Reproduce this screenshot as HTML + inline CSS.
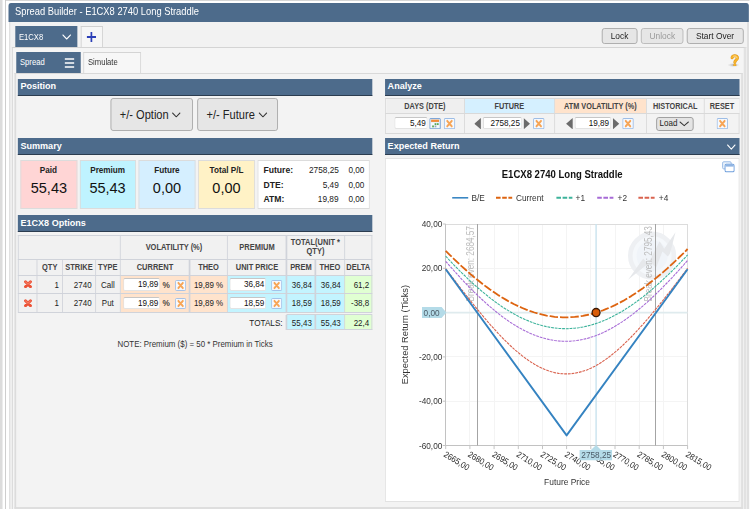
<!DOCTYPE html>
<html lang="en"><head><meta charset="utf-8"><title>Spread Builder - E1CX8 2740 Long Straddle</title>
<style>
html,body{margin:0;padding:0;background:#fff;overflow:hidden}
body{width:750px;height:509px;position:relative;font-family:"Liberation Sans",sans-serif}
#w{position:absolute;left:0;top:0;width:882.35px;height:509px;transform:scaleX(.85);transform-origin:0 0;overflow:hidden}
.a{position:absolute;box-sizing:border-box}
.t{white-space:nowrap}
</style></head><body>
<div id="w">
<div class="a" style="left:0.0px;top:0px;width:3.41px;height:509px;background:#dcdcdc"></div>
<div class="a" style="left:5.88px;top:0px;width:876.47px;height:1.1px;background:#d6d6d6"></div>
<div class="a" style="left:5.88px;top:0px;width:1.3px;height:509px;background:#c6c6c6"></div>
<div class="a" style="left:11px;top:22px;width:870px;height:487px;background:#f2f2f2;border-left:1px solid #d6d6d6;border-right:2px solid #dedede"></div>
<div class="a" style="left:882px;top:300px;width:1px;height:209px;background:#e2e2e2"></div>
<div class="a" style="left:10px;top:3px;width:871px;height:19px;background:#4d6b8b;border-radius:3px 3px 0 0"></div>
<div class="a t" style="left:17.65px;top:2.4px;height:18.0px;line-height:18.0px;color:#fff;font-size:11px">Spread Builder - E1CX8 2740 Long Straddle</div>
<div class="a" style="left:17.65px;top:26px;width:72.94px;height:22px;background:#4d6b8b"></div>
<div class="a t" style="left:22.35px;top:26.8px;height:21.4px;line-height:21.4px;color:#fff;font-size:9px">E1CX8</div>
<svg class="a" style="left:73.53px;top:35.2px;overflow:visible" width="8.94" height="4.0"><polyline points="0,0 4.47,4.0 8.94,0" fill="none" stroke="#fff" stroke-width="1.15" stroke-linecap="round" stroke-linejoin="round"/></svg>
<div class="a" style="left:94.59px;top:25.6px;width:26.35px;height:22.4px;background:#f6f6f6;border:1px solid #d0d0d0;border-bottom:none"></div>
<svg class="a" style="left:101.88px;top:31.6px" width="11.06" height="10"><path d="M0 5 H11.06 M5.53 0 V10" stroke="#2b3fb7" stroke-width="2" fill="none"/></svg>
<div class="a" style="left:708.24px;top:28.4px;width:42.0px;height:15.2px;background:#e6e6e6;border:1px solid #a9a9a9;border-radius:3px;"></div><div class="a t" style="left:708.24px;width:42.0px;text-align:center;top:29.0px;height:15.2px;line-height:15.2px;color:#222;font-size:9.3px"><span style="display:inline-block;transform:scaleX(1.0588);transform-origin:50% 50%">Lock</span></div>
<div class="a" style="left:754.47px;top:28.4px;width:49.65px;height:15.2px;background:#e6e6e6;border:1px solid #a9a9a9;border-radius:3px;border-color:#b8b8b8;"></div><div class="a t" style="left:754.47px;width:49.65px;text-align:center;top:29.0px;height:15.2px;line-height:15.2px;color:#9a9a9a;font-size:9.3px"><span style="display:inline-block;transform:scaleX(1.0588);transform-origin:50% 50%">Unlock</span></div>
<div class="a" style="left:808.35px;top:28.4px;width:66.59px;height:15.2px;background:#e6e6e6;border:1px solid #a9a9a9;border-radius:3px;"></div><div class="a t" style="left:808.35px;width:66.59px;text-align:center;top:29.0px;height:15.2px;line-height:15.2px;color:#222;font-size:9.3px"><span style="display:inline-block;transform:scaleX(1.0588);transform-origin:50% 50%">Start Over</span></div>
<div class="a" style="left:14px;top:47.4px;width:864px;height:464.6px;background:#f5f5f5;border:1px solid #d4d4d4;border-right:3px solid #e2e2e2"></div>
<div class="a" style="left:18.82px;top:52.4px;width:75.77px;height:21.6px;background:#4d6b8b"></div>
<div class="a t" style="left:23.53px;top:52.4px;height:21.0px;line-height:21.0px;color:#fff;font-size:9px">Spread</div>
<svg class="a" style="left:76.24px;top:57.6px" width="11.29" height="10"><path d="M0 1 H11.29 M0 5 H11.29 M0 9 H11.29" stroke="#fff" stroke-width="1.3" fill="none"/></svg>
<div class="a" style="left:97.88px;top:52px;width:67.77px;height:22px;background:#f7f7f7;border:1px solid #d4d4d4;border-bottom:none"></div>
<div class="a t" style="left:103.53px;top:52.4px;height:21.0px;line-height:21.0px;color:#333;font-size:9px">Simulate</div>
<div class="a" style="left:856.0px;top:63.4px;width:14.12px;height:3.2px;background:radial-gradient(ellipse at center,rgba(150,150,150,.75) 0%,rgba(190,190,190,.35) 45%,rgba(220,220,220,0) 72%)"></div>
<svg class="a" style="left:859.18px;top:53.5px" width="10.82" height="12.6" viewBox="0 0 9.2 12.6" preserveAspectRatio="none"><g fill="none" stroke-linecap="round"><path d="M1.9 3.7 C1.9 1.1 7.3 0.9 7.3 3.9 C7.3 5.8 4.7 6.1 4.7 8.3" stroke="#dc961d" stroke-width="3"/><path d="M1.9 3.7 C1.9 1.1 7.3 0.9 7.3 3.9 C7.3 5.8 4.7 6.1 4.7 8.3" stroke="#f8b42a" stroke-width="2.1"/><path d="M3.6 2.2 C5.2 1.6 6.9 2.3 6.9 3.9" stroke="#fde2a2" stroke-width=".9"/></g><circle cx="4.7" cy="11" r="1.55" fill="#dc961d"/><circle cx="4.7" cy="10.9" r="1.1" fill="#f8b42a"/></svg>
<div class="a" style="left:17px;top:73.2px;width:857px;height:435.8px;background:#f3f3f3;border:1px solid #d9d9d9;border-bottom:2px solid #dedede;border-left:2px solid #dcdcdc;border-right:2px solid #dedede"></div>
<div class="a" style="left:20.71px;top:79px;width:416.94px;height:16.6px;background:#4d6b8b;border-bottom:1.6px solid #2b3c4f"></div><div class="a t" style="left:23.53px;top:79.1px;height:14.4px;line-height:14.4px;color:#fff;font-weight:bold;font-size:9.8px"><span style="display:inline-block;transform:scaleX(1.0882);transform-origin:0 50%">Position</span></div>
<div class="a" style="left:453.41px;top:79px;width:416.83px;height:16.6px;background:#4d6b8b;border-bottom:1.6px solid #2b3c4f"></div><div class="a t" style="left:456.24px;top:79.1px;height:14.4px;line-height:14.4px;color:#fff;font-weight:bold;font-size:9.8px"><span style="display:inline-block;transform:scaleX(1.0882);transform-origin:0 50%">Analyze</span></div>
<div class="a" style="left:20.71px;top:138.4px;width:416.94px;height:16.8px;background:#4d6b8b;border-bottom:1.6px solid #2b3c4f"></div><div class="a t" style="left:23.53px;top:138.5px;height:14.6px;line-height:14.6px;color:#fff;font-weight:bold;font-size:9.8px"><span style="display:inline-block;transform:scaleX(1.0882);transform-origin:0 50%">Summary</span></div>
<div class="a" style="left:453.41px;top:138.4px;width:416.83px;height:16.8px;background:#4d6b8b;border-bottom:1.6px solid #2b3c4f"></div><div class="a t" style="left:456.24px;top:138.5px;height:14.6px;line-height:14.6px;color:#fff;font-weight:bold;font-size:9.8px"><span style="display:inline-block;transform:scaleX(1.0882);transform-origin:0 50%">Expected Return</span></div>
<div class="a" style="left:20.71px;top:215.4px;width:416.94px;height:16.8px;background:#4d6b8b;border-bottom:1.6px solid #2b3c4f"></div><div class="a t" style="left:23.53px;top:215.5px;height:14.6px;line-height:14.6px;color:#fff;font-weight:bold;font-size:9.8px"><span style="display:inline-block;transform:scaleX(1.0882);transform-origin:0 50%">E1CX8 Options</span></div>
<svg class="a" style="left:856.24px;top:144.9px;overflow:visible" width="8.71" height="4.2"><polyline points="0,0 4.355,4.2 8.71,0" fill="none" stroke="#fff" stroke-width="1.15" stroke-linecap="round" stroke-linejoin="round"/></svg>
<div class="a" style="left:129.65px;top:98.2px;width:96.94px;height:32.4px;background:#e6e6e6;border:1px solid #a9a9a9;border-radius:3px"></div><div class="a t" style="left:140.94px;top:99.2px;height:32.0px;line-height:32.0px;color:#222;font-size:13px">+/- Option</div><svg class="a" style="left:203.41px;top:113.1px;overflow:visible" width="8.71" height="3.8"><polyline points="0,0 4.355,3.8 8.71,0" fill="none" stroke="#333" stroke-width="1.05" stroke-linecap="round" stroke-linejoin="round"/></svg>
<div class="a" style="left:232.24px;top:98.2px;width:95.05px;height:32.4px;background:#e6e6e6;border:1px solid #a9a9a9;border-radius:3px"></div><div class="a t" style="left:243.06px;top:99.2px;height:32.0px;line-height:32.0px;color:#222;font-size:13px">+/- Future</div><svg class="a" style="left:304.59px;top:113.1px;overflow:visible" width="8.71" height="3.8"><polyline points="0,0 4.355,3.8 8.71,0" fill="none" stroke="#333" stroke-width="1.05" stroke-linecap="round" stroke-linejoin="round"/></svg>
<div class="a" style="left:453.41px;top:98px;width:416.83px;height:35.6px;background:#f3f3f3;border:1px solid #d9d9d9"></div>
<div class="a" style="left:454.59px;top:99px;width:91.76px;height:14.2px;background:#efefef"></div>
<div class="a t" style="left:453.41px;width:92.94px;text-align:center;top:99px;height:14px;line-height:14px;color:#444;font-weight:bold;font-size:8.6px">DAYS (DTE)</div>
<div class="a" style="left:546.94px;top:99px;width:105.18px;height:14.2px;background:#d5f0ff"></div>
<div class="a t" style="left:546.35px;width:105.77px;text-align:center;top:99px;height:14px;line-height:14px;color:#444;font-weight:bold;font-size:8.6px">FUTURE</div>
<div class="a" style="left:652.71px;top:99px;width:107.76px;height:14.2px;background:#ffe3cc"></div>
<div class="a t" style="left:652.12px;width:108.35px;text-align:center;top:99px;height:14px;line-height:14px;color:#444;font-weight:bold;font-size:8.6px">ATM VOLATILITY (%)</div>
<div class="a" style="left:761.06px;top:99px;width:67.41px;height:14.2px;background:#f4f4f4"></div>
<div class="a t" style="left:760.47px;width:68.0px;text-align:center;top:99px;height:14px;line-height:14px;color:#444;font-weight:bold;font-size:8.6px">HISTORICAL</div>
<div class="a" style="left:829.06px;top:99px;width:40.47px;height:14.2px;background:#f4f4f4"></div>
<div class="a t" style="left:828.47px;width:41.77px;text-align:center;top:99px;height:14px;line-height:14px;color:#444;font-weight:bold;font-size:8.6px">RESET</div>
<div class="a" style="left:545.76px;top:98px;width:1.18px;height:35.6px;background:#d9d9d9"></div>
<div class="a" style="left:651.53px;top:98px;width:1.18px;height:35.6px;background:#d9d9d9"></div>
<div class="a" style="left:759.88px;top:98px;width:1.18px;height:35.6px;background:#d9d9d9"></div>
<div class="a" style="left:827.88px;top:98px;width:1.18px;height:35.6px;background:#d9d9d9"></div>
<div class="a" style="left:453.41px;top:112.8px;width:416.83px;height:1.0px;background:#d9d9d9"></div>
<div class="a" style="left:463.53px;top:117.3px;width:39.76px;height:12.0px;background:#fff;border:1px solid #e3e3e3;border-top-color:#c6c6c6;border-left-color:#d2d2d2;color:#111;font-size:9.6px;text-align:right;padding-right:1.2px;line-height:10.2px;border-radius:2px">5,49</div>
<svg class="a" style="left:504.94px;top:118.0px" width="13.65" height="11.4" viewBox="0 0 13 11"><rect x=".5" y=".5" width="12" height="10" rx="1" fill="#dfeaf6" stroke="#7ea6d8"/><rect x="2" y="1.6" width="9" height="2.2" fill="#f08c3a"/><rect x="2" y="4.4" width="9" height="5" fill="#f7fafd"/><rect x="6" y="5" width="2" height="1.8" fill="#5aa65a"/><rect x="8.6" y="5" width="2" height="1.8" fill="#5aa65a"/><rect x="3.2" y="7.2" width="2" height="1.8" fill="#5aa65a"/><rect x="6" y="7.2" width="2" height="1.8" fill="#9ab"/></svg>
<svg class="a" style="left:521.88px;top:118.2px" width="13.65" height="11.2" viewBox="0 0 13 11"><rect x=".5" y=".5" width="12" height="10" rx="1" fill="#f6f9fd" stroke="#9dbde6"/><path d="M3.9 2.9 L9.1 8.1 M9.1 2.9 L3.9 8.1" stroke="#f7a556" stroke-width="2.2" stroke-linecap="round" fill="none"/></svg>
<svg class="a" style="left:558.35px;top:117.7px" width="7.77" height="11.4"><polygon points="7.77,0 7.77,11.4 0,5.7" fill="#6b6b6b"/></svg>
<div class="a" style="left:568.47px;top:117.3px;width:45.41px;height:12.0px;background:#fff;border:1px solid #e3e3e3;border-top-color:#c6c6c6;border-left-color:#d2d2d2;color:#111;font-size:9.6px;text-align:right;padding-right:1.2px;line-height:10.2px;border-radius:2px">2758,25</div>
<svg class="a" style="left:616.24px;top:117.7px" width="7.52" height="11.4"><polygon points="0,0 7.52,5.7 0,11.4" fill="#6b6b6b"/></svg>
<svg class="a" style="left:627.06px;top:118.2px" width="13.65" height="11.2" viewBox="0 0 13 11"><rect x=".5" y=".5" width="12" height="10" rx="1" fill="#f6f9fd" stroke="#9dbde6"/><path d="M3.9 2.9 L9.1 8.1 M9.1 2.9 L3.9 8.1" stroke="#f7a556" stroke-width="2.2" stroke-linecap="round" fill="none"/></svg>
<svg class="a" style="left:666.12px;top:117.7px" width="7.76" height="11.4"><polygon points="7.76,0 7.76,11.4 0,5.7" fill="#6b6b6b"/></svg>
<div class="a" style="left:676.47px;top:117.3px;width:42.35px;height:12.0px;background:#fff;border:1px solid #e3e3e3;border-top-color:#c6c6c6;border-left-color:#d2d2d2;color:#111;font-size:9.6px;text-align:right;padding-right:1.2px;line-height:10.2px;border-radius:2px">19,89</div>
<svg class="a" style="left:721.18px;top:117.7px" width="7.53" height="11.4"><polygon points="0,0 7.53,5.7 0,11.4" fill="#6b6b6b"/></svg>
<svg class="a" style="left:732.24px;top:118.2px" width="13.65" height="11.2" viewBox="0 0 13 11"><rect x=".5" y=".5" width="12" height="10" rx="1" fill="#f6f9fd" stroke="#9dbde6"/><path d="M3.9 2.9 L9.1 8.1 M9.1 2.9 L3.9 8.1" stroke="#f7a556" stroke-width="2.2" stroke-linecap="round" fill="none"/></svg>
<div class="a" style="left:772.0px;top:116.8px;width:44.24px;height:14.0px;background:#e4e4e4;border:1px solid #999;border-radius:3px"></div>
<div class="a t" style="left:775.53px;top:117.2px;height:13.6px;line-height:13.6px;color:#222;font-size:9.2px"><span style="display:inline-block;transform:scaleX(1.0235);transform-origin:0 50%">Load</span></div>
<svg class="a" style="left:800.47px;top:122.2px;overflow:visible" width="9.88" height="3.6"><polyline points="0,0 4.94,3.6 9.88,0" fill="none" stroke="#333" stroke-width="1.05" stroke-linecap="round" stroke-linejoin="round"/></svg>
<svg class="a" style="left:843.18px;top:118.2px" width="13.65" height="11.2" viewBox="0 0 13 11"><rect x=".5" y=".5" width="12" height="10" rx="1" fill="#f6f9fd" stroke="#9dbde6"/><path d="M3.9 2.9 L9.1 8.1 M9.1 2.9 L3.9 8.1" stroke="#f7a556" stroke-width="2.2" stroke-linecap="round" fill="none"/></svg>
<div class="a" style="left:23.53px;top:160px;width:67.06px;height:49px;background:#ffd5d5;border:1px solid #dcdcdc"></div><div class="a t" style="left:23.53px;width:67.06px;text-align:center;top:163px;height:14px;line-height:14px;color:#222;font-weight:bold;font-size:9.6px">Paid</div><div class="a t" style="left:23.53px;width:67.06px;text-align:center;top:177.0px;height:22.0px;line-height:22.0px;color:#111;font-size:14.8px"><span style="display:inline-block;transform:scaleX(1.1529);transform-origin:50% 50%">55,43</span></div>
<div class="a" style="left:93.65px;top:160px;width:66.0px;height:49px;background:#bff3ff;border:1px solid #dcdcdc"></div><div class="a t" style="left:93.65px;width:66.0px;text-align:center;top:163px;height:14px;line-height:14px;color:#222;font-weight:bold;font-size:9.6px">Premium</div><div class="a t" style="left:93.65px;width:66.0px;text-align:center;top:177.0px;height:22.0px;line-height:22.0px;color:#111;font-size:14.8px"><span style="display:inline-block;transform:scaleX(1.1529);transform-origin:50% 50%">55,43</span></div>
<div class="a" style="left:162.71px;top:160px;width:67.41px;height:49px;background:#d5efff;border:1px solid #dcdcdc"></div><div class="a t" style="left:162.71px;width:67.41px;text-align:center;top:163px;height:14px;line-height:14px;color:#222;font-weight:bold;font-size:9.6px">Future</div><div class="a t" style="left:162.71px;width:67.41px;text-align:center;top:177.0px;height:22.0px;line-height:22.0px;color:#111;font-size:14.8px"><span style="display:inline-block;transform:scaleX(1.1529);transform-origin:50% 50%">0,00</span></div>
<div class="a" style="left:233.18px;top:160px;width:66.7px;height:49px;background:#fff2c6;border:1px solid #dcdcdc"></div><div class="a t" style="left:233.18px;width:66.7px;text-align:center;top:163px;height:14px;line-height:14px;color:#222;font-weight:bold;font-size:9.6px">Total P/L</div><div class="a t" style="left:233.18px;width:66.7px;text-align:center;top:177.0px;height:22.0px;line-height:22.0px;color:#111;font-size:14.8px"><span style="display:inline-block;transform:scaleX(1.1529);transform-origin:50% 50%">0,00</span></div>
<div class="a" style="left:302.82px;top:160px;width:132.24px;height:49px;background:#fff;border:1px solid #dcdcdc"></div>
<div class="a t" style="left:310.12px;top:162.9px;height:14.0px;line-height:14.0px;color:#222;font-weight:bold;font-size:8.6px"><span style="display:inline-block;transform:scaleX(1.1765);transform-origin:0 50%">Future:</span></div>
<div class="a t" style="right:483.88px;top:162.9px;height:14.0px;line-height:14.0px;color:#222;font-size:8.5px"><span style="display:inline-block;transform:scaleX(1.1471);transform-origin:100% 50%">2758,25</span></div>
<div class="a t" style="right:454.23px;top:162.9px;height:14.0px;line-height:14.0px;color:#222;font-size:8.5px"><span style="display:inline-block;transform:scaleX(1.1294);transform-origin:100% 50%">0,00</span></div>
<div class="a t" style="left:310.12px;top:177.6px;height:14.0px;line-height:14.0px;color:#222;font-weight:bold;font-size:8.6px"><span style="display:inline-block;transform:scaleX(1.1765);transform-origin:0 50%">DTE:</span></div>
<div class="a t" style="right:483.88px;top:177.6px;height:14.0px;line-height:14.0px;color:#222;font-size:8.5px"><span style="display:inline-block;transform:scaleX(1.1471);transform-origin:100% 50%">5,49</span></div>
<div class="a t" style="right:454.23px;top:177.6px;height:14.0px;line-height:14.0px;color:#222;font-size:8.5px"><span style="display:inline-block;transform:scaleX(1.1294);transform-origin:100% 50%">0,00</span></div>
<div class="a t" style="left:310.12px;top:192.0px;height:14.0px;line-height:14.0px;color:#222;font-weight:bold;font-size:8.6px"><span style="display:inline-block;transform:scaleX(1.1765);transform-origin:0 50%">ATM:</span></div>
<div class="a t" style="right:483.88px;top:192.0px;height:14.0px;line-height:14.0px;color:#222;font-size:8.5px"><span style="display:inline-block;transform:scaleX(1.1471);transform-origin:100% 50%">19,89</span></div>
<div class="a t" style="right:454.23px;top:192.0px;height:14.0px;line-height:14.0px;color:#222;font-size:8.5px"><span style="display:inline-block;transform:scaleX(1.1294);transform-origin:100% 50%">0,00</span></div>
<div class="a" style="left:21.41px;top:235px;width:416.24px;height:76.7px;background:#f1f1f1"></div>
<div class="a" style="left:141.65px;top:275px;width:126.0px;height:18.2px;background:#ffe3cc"></div>
<div class="a" style="left:267.65px;top:275px;width:137.53px;height:18.2px;background:#c3f4ff"></div>
<div class="a" style="left:405.18px;top:275px;width:32.47px;height:18.2px;background:#e0ffd2"></div>
<div class="a" style="left:141.65px;top:293.2px;width:126.0px;height:19.0px;background:#ffe3cc"></div>
<div class="a" style="left:267.65px;top:293.2px;width:137.53px;height:19.0px;background:#c3f4ff"></div>
<div class="a" style="left:405.18px;top:293.2px;width:32.47px;height:19.0px;background:#e0ffd2"></div>
<div class="a" style="left:337.06px;top:314.6px;width:68.12px;height:15.0px;background:#c3f4ff"></div>
<div class="a" style="left:405.18px;top:314.6px;width:32.47px;height:15.0px;background:#e0ffd2"></div>
<div class="a" style="left:21.41px;top:234.5px;width:416.71px;height:1.0px;background:#d0d3da"></div>
<div class="a" style="left:21.41px;top:259.4px;width:416.71px;height:1.0px;background:#d0d3da"></div>
<div class="a" style="left:21.41px;top:274.5px;width:416.71px;height:1.0px;background:#d0d3da"></div>
<div class="a" style="left:21.41px;top:292.7px;width:416.71px;height:1.0px;background:#d0d3da"></div>
<div class="a" style="left:21.41px;top:311.7px;width:416.71px;height:1.0px;background:#d0d3da"></div>
<div class="a" style="left:336.59px;top:314.1px;width:101.53px;height:1.0px;background:#d0d3da"></div>
<div class="a" style="left:336.59px;top:329.1px;width:101.53px;height:1.0px;background:#d0d3da"></div>
<div class="a" style="left:20.82px;top:235px;width:1.3px;height:77.2px;background:#d0d3da"></div>
<div class="a" style="left:42.71px;top:259.9px;width:1.29px;height:52.3px;background:#d0d3da"></div>
<div class="a" style="left:73.18px;top:259.9px;width:1.29px;height:52.3px;background:#d0d3da"></div>
<div class="a" style="left:111.53px;top:259.9px;width:1.29px;height:52.3px;background:#d0d3da"></div>
<div class="a" style="left:141.06px;top:235px;width:1.29px;height:77.2px;background:#d0d3da"></div>
<div class="a" style="left:222.47px;top:259.9px;width:1.29px;height:52.3px;background:#d0d3da"></div>
<div class="a" style="left:267.06px;top:235px;width:1.29px;height:77.2px;background:#d0d3da"></div>
<div class="a" style="left:336.47px;top:235px;width:1.29px;height:77.2px;background:#d0d3da"></div>
<div class="a" style="left:370.47px;top:259.9px;width:1.29px;height:52.3px;background:#d0d3da"></div>
<div class="a" style="left:404.59px;top:235px;width:1.29px;height:77.2px;background:#d0d3da"></div>
<div class="a" style="left:437.06px;top:235px;width:1.29px;height:77.2px;background:#d0d3da"></div>
<div class="a" style="left:336.47px;top:314.6px;width:1.29px;height:15.0px;background:#d0d3da"></div>
<div class="a" style="left:370.47px;top:314.6px;width:1.29px;height:15.0px;background:#d0d3da"></div>
<div class="a" style="left:404.59px;top:314.6px;width:1.29px;height:15.0px;background:#d0d3da"></div>
<div class="a" style="left:437.06px;top:314.6px;width:1.29px;height:15.0px;background:#d0d3da"></div>
<div class="a t" style="left:141.65px;width:126.0px;text-align:center;top:235px;height:24.9px;line-height:24.9px;color:#444;font-weight:bold;font-size:8.8px">VOLATILITY (%)</div>
<div class="a t" style="left:267.65px;width:69.41px;text-align:center;top:235px;height:24.9px;line-height:24.9px;color:#444;font-weight:bold;font-size:8.8px">PREMIUM</div>
<div class="a" style="left:337.06px;top:238.0px;width:68.12px;text-align:center;line-height:9.4px;color:#444;font-weight:bold;font-size:8.8px">TOTAL(UNIT *<br>QTY)</div>
<div class="a t" style="left:43.29px;width:30.47px;text-align:center;top:259.9px;height:15.7px;line-height:15.7px;color:#444;font-weight:bold;font-size:8.8px">QTY</div>
<div class="a t" style="left:73.76px;width:38.36px;text-align:center;top:259.9px;height:15.7px;line-height:15.7px;color:#444;font-weight:bold;font-size:8.8px">STRIKE</div>
<div class="a t" style="left:112.12px;width:29.53px;text-align:center;top:259.9px;height:15.7px;line-height:15.7px;color:#444;font-weight:bold;font-size:8.8px">TYPE</div>
<div class="a t" style="left:141.65px;width:81.41px;text-align:center;top:259.9px;height:15.7px;line-height:15.7px;color:#444;font-weight:bold;font-size:8.8px">CURRENT</div>
<div class="a t" style="left:223.06px;width:44.59px;text-align:center;top:259.9px;height:15.7px;line-height:15.7px;color:#444;font-weight:bold;font-size:8.8px">THEO</div>
<div class="a t" style="left:267.65px;width:69.41px;text-align:center;top:259.9px;height:15.7px;line-height:15.7px;color:#444;font-weight:bold;font-size:8.8px">UNIT PRICE</div>
<div class="a t" style="left:337.06px;width:34.0px;text-align:center;top:259.9px;height:15.7px;line-height:15.7px;color:#444;font-weight:bold;font-size:8.8px">PREM</div>
<div class="a t" style="left:371.06px;width:34.12px;text-align:center;top:259.9px;height:15.7px;line-height:15.7px;color:#444;font-weight:bold;font-size:8.8px">THEO</div>
<div class="a t" style="left:405.18px;width:32.47px;text-align:center;top:259.9px;height:15.7px;line-height:15.7px;color:#444;font-weight:bold;font-size:8.8px">DELTA</div>
<svg class="a" style="left:27.76px;top:279.95px" width="9.88" height="8.5" viewBox="0 0 8.4 8.8" preserveAspectRatio="none"><defs><linearGradient id="rg" x1="0" y1="0" x2="0" y2="1"><stop offset="0" stop-color="#f4735a"/><stop offset="1" stop-color="#e8462b"/></linearGradient></defs><path d="M1.7 1.8 L6.7 7 M6.7 1.8 L1.7 7" stroke="#ec5337" stroke-width="2.9" stroke-linecap="round" fill="none"/><path d="M1.9 1.9 L4.2 4.2 L6.5 1.9" stroke="#f47a62" stroke-width="1.2" stroke-linecap="round" fill="none"/></svg>
<div class="a t" style="right:812.94px;top:275px;height:20.0px;line-height:20.0px;color:#222;font-size:9.4px">1</div>
<div class="a t" style="right:774.59px;top:275px;height:20.0px;line-height:20.0px;color:#222;font-size:9.4px">2740</div>
<div class="a t" style="left:112.12px;width:29.53px;text-align:center;top:275px;height:20.0px;line-height:20.0px;color:#222;font-size:9.4px">Call</div>
<div class="a" style="left:145.29px;top:278.1px;width:43.18px;height:12.6px;background:#fff;border:1px solid #e3e3e3;border-top-color:#c6c6c6;border-left-color:#d2d2d2;color:#111;font-size:9.6px;text-align:right;padding-right:1.2px;line-height:10.8px;border-radius:2px">19,89</div>
<div class="a t" style="left:191.06px;top:275px;height:19.8px;line-height:19.8px;color:#222;font-size:9.4px;font-size:9.6px;color:#111;-webkit-text-stroke:.12px #333">%</div>
<svg class="a" style="left:205.76px;top:279.6px" width="12.94" height="11" viewBox="0 0 13 11"><rect x=".5" y=".5" width="12" height="10" rx="1" fill="#f6f9fd" stroke="#9dbde6"/><path d="M3.9 2.9 L9.1 8.1 M9.1 2.9 L3.9 8.1" stroke="#f7a556" stroke-width="2.2" stroke-linecap="round" fill="none"/></svg>
<div class="a t" style="left:223.06px;width:44.59px;text-align:center;top:275px;height:20.0px;line-height:20.0px;color:#222;font-size:9.4px">19,89 %</div>
<div class="a" style="left:270.24px;top:278.1px;width:42.94px;height:12.6px;background:#fff;border:1px solid #e3e3e3;border-top-color:#c6c6c6;border-left-color:#d2d2d2;color:#111;font-size:9.6px;text-align:right;padding-right:1.2px;line-height:10.8px;border-radius:2px">36,84</div>
<svg class="a" style="left:318.82px;top:279.6px" width="12.94" height="11" viewBox="0 0 13 11"><rect x=".5" y=".5" width="12" height="10" rx="1" fill="#f6f9fd" stroke="#9dbde6"/><path d="M3.9 2.9 L9.1 8.1 M9.1 2.9 L3.9 8.1" stroke="#f7a556" stroke-width="2.2" stroke-linecap="round" fill="none"/></svg>
<div class="a t" style="left:339.18px;width:31.88px;text-align:center;top:275px;height:20.0px;line-height:20.0px;color:#222;font-size:9.4px">36,84</div>
<div class="a t" style="left:373.18px;width:32.0px;text-align:center;top:275px;height:20.0px;line-height:20.0px;color:#222;font-size:9.4px">36,84</div>
<div class="a t" style="right:448.0px;top:275px;height:20.0px;line-height:20.0px;color:#222;font-size:9.4px">61,2</div>
<svg class="a" style="left:27.76px;top:298.55px" width="9.88" height="8.5" viewBox="0 0 8.4 8.8" preserveAspectRatio="none"><defs><linearGradient id="rg" x1="0" y1="0" x2="0" y2="1"><stop offset="0" stop-color="#f4735a"/><stop offset="1" stop-color="#e8462b"/></linearGradient></defs><path d="M1.7 1.8 L6.7 7 M6.7 1.8 L1.7 7" stroke="#ec5337" stroke-width="2.9" stroke-linecap="round" fill="none"/><path d="M1.9 1.9 L4.2 4.2 L6.5 1.9" stroke="#f47a62" stroke-width="1.2" stroke-linecap="round" fill="none"/></svg>
<div class="a t" style="right:812.94px;top:293.2px;height:20.8px;line-height:20.8px;color:#222;font-size:9.4px">1</div>
<div class="a t" style="right:774.59px;top:293.2px;height:20.8px;line-height:20.8px;color:#222;font-size:9.4px">2740</div>
<div class="a t" style="left:112.12px;width:29.53px;text-align:center;top:293.2px;height:20.8px;line-height:20.8px;color:#222;font-size:9.4px">Put</div>
<div class="a" style="left:145.29px;top:296.7px;width:43.18px;height:12.6px;background:#fff;border:1px solid #e3e3e3;border-top-color:#c6c6c6;border-left-color:#d2d2d2;color:#111;font-size:9.6px;text-align:right;padding-right:1.2px;line-height:10.8px;border-radius:2px">19,89</div>
<div class="a t" style="left:191.06px;top:293.2px;height:20.6px;line-height:20.6px;color:#222;font-size:9.4px;font-size:9.6px;color:#111;-webkit-text-stroke:.12px #333">%</div>
<svg class="a" style="left:205.76px;top:298.2px" width="12.94" height="11" viewBox="0 0 13 11"><rect x=".5" y=".5" width="12" height="10" rx="1" fill="#f6f9fd" stroke="#9dbde6"/><path d="M3.9 2.9 L9.1 8.1 M9.1 2.9 L3.9 8.1" stroke="#f7a556" stroke-width="2.2" stroke-linecap="round" fill="none"/></svg>
<div class="a t" style="left:223.06px;width:44.59px;text-align:center;top:293.2px;height:20.8px;line-height:20.8px;color:#222;font-size:9.4px">19,89 %</div>
<div class="a" style="left:270.24px;top:296.7px;width:42.94px;height:12.6px;background:#fff;border:1px solid #e3e3e3;border-top-color:#c6c6c6;border-left-color:#d2d2d2;color:#111;font-size:9.6px;text-align:right;padding-right:1.2px;line-height:10.8px;border-radius:2px">18,59</div>
<svg class="a" style="left:318.82px;top:298.2px" width="12.94" height="11" viewBox="0 0 13 11"><rect x=".5" y=".5" width="12" height="10" rx="1" fill="#f6f9fd" stroke="#9dbde6"/><path d="M3.9 2.9 L9.1 8.1 M9.1 2.9 L3.9 8.1" stroke="#f7a556" stroke-width="2.2" stroke-linecap="round" fill="none"/></svg>
<div class="a t" style="left:339.18px;width:31.88px;text-align:center;top:293.2px;height:20.8px;line-height:20.8px;color:#222;font-size:9.4px">18,59</div>
<div class="a t" style="left:373.18px;width:32.0px;text-align:center;top:293.2px;height:20.8px;line-height:20.8px;color:#222;font-size:9.4px">18,59</div>
<div class="a t" style="right:448.0px;top:293.2px;height:20.8px;line-height:20.8px;color:#222;font-size:9.4px">-38,8</div>
<div class="a t" style="right:549.88px;top:314.6px;height:15.8px;line-height:15.8px;color:#222;font-size:9.6px">TOTALS:</div>
<div class="a t" style="left:339.18px;width:31.88px;text-align:center;top:314.6px;height:15.8px;line-height:15.8px;color:#222;font-size:9.4px">55,43</div>
<div class="a t" style="left:373.18px;width:32.0px;text-align:center;top:314.6px;height:15.8px;line-height:15.8px;color:#222;font-size:9.4px">55,43</div>
<div class="a t" style="right:448.0px;top:314.6px;height:15.8px;line-height:15.8px;color:#222;font-size:9.4px">22,4</div>
<div class="a t" style="left:21.41px;width:416.24px;text-align:center;top:337px;height:14px;line-height:14px;color:#333;font-size:9.3px">NOTE: Premium ($) = 50 * Premium in Ticks</div>
<div class="a" style="left:453.41px;top:158px;width:416.83px;height:343.6px;background:#fff;border:1px solid #e2e2e2"></div>
<svg class="a" style="left:849.18px;top:161.2px" width="15.76" height="11.6" viewBox="0 0 16 12"><rect x="1" y=".8" width="10.5" height="7.4" rx="1.4" fill="#eaf2fb" stroke="#8fb4e3" stroke-width="1"/><rect x="4" y="3.4" width="11" height="7.8" rx="1.4" fill="#fff" stroke="#6f9fdc" stroke-width="1.1"/><rect x="4.5" y="4" width="10" height="1.8" fill="#8fb4e3"/></svg>
</div>
<svg id="chart" width="750" height="509" viewBox="0 0 750 509" font-family="'Liberation Sans', sans-serif" style="position:absolute;left:0;top:0">
<line x1="445.5" y1="224.0" x2="445.5" y2="445.5" stroke="#f4f4f4" stroke-width="1"/>
<line x1="469.5" y1="224.0" x2="469.5" y2="445.5" stroke="#f4f4f4" stroke-width="1"/>
<line x1="494.5" y1="224.0" x2="494.5" y2="445.5" stroke="#f4f4f4" stroke-width="1"/>
<line x1="518.5" y1="224.0" x2="518.5" y2="445.5" stroke="#f4f4f4" stroke-width="1"/>
<line x1="542.5" y1="224.0" x2="542.5" y2="445.5" stroke="#f4f4f4" stroke-width="1"/>
<line x1="566.5" y1="224.0" x2="566.5" y2="445.5" stroke="#f4f4f4" stroke-width="1"/>
<line x1="590.5" y1="224.0" x2="590.5" y2="445.5" stroke="#f4f4f4" stroke-width="1"/>
<line x1="615.5" y1="224.0" x2="615.5" y2="445.5" stroke="#f4f4f4" stroke-width="1"/>
<line x1="639.5" y1="224.0" x2="639.5" y2="445.5" stroke="#f4f4f4" stroke-width="1"/>
<line x1="663.5" y1="224.0" x2="663.5" y2="445.5" stroke="#f4f4f4" stroke-width="1"/>
<line x1="687.5" y1="224.0" x2="687.5" y2="445.5" stroke="#f4f4f4" stroke-width="1"/>
<line x1="445.7" y1="224.5" x2="687.6" y2="224.5" stroke="#f4f4f4" stroke-width="1"/>
<line x1="445.7" y1="268.5" x2="687.6" y2="268.5" stroke="#f4f4f4" stroke-width="1"/>
<line x1="445.7" y1="312.5" x2="687.6" y2="312.5" stroke="#f4f4f4" stroke-width="1"/>
<line x1="445.7" y1="356.5" x2="687.6" y2="356.5" stroke="#f4f4f4" stroke-width="1"/>
<line x1="445.7" y1="401.5" x2="687.6" y2="401.5" stroke="#f4f4f4" stroke-width="1"/>
<line x1="445.7" y1="445.5" x2="687.6" y2="445.5" stroke="#f4f4f4" stroke-width="1"/>
<rect x="445.5" y="224.5" width="242.0" height="221.0" fill="none" stroke="#dcdcdc" stroke-width="1"/>
<line x1="445.5" y1="224.0" x2="445.5" y2="445.5" stroke="#c2c2c2" stroke-width="1"/>
<line x1="445.7" y1="445.5" x2="687.6" y2="445.5" stroke="#c2c2c2" stroke-width="1"/>
<line x1="445.7" y1="445.5" x2="445.7" y2="449.1" stroke="#c4c4c4" stroke-width="1"/>
<line x1="469.9" y1="445.5" x2="469.9" y2="449.1" stroke="#c4c4c4" stroke-width="1"/>
<line x1="494.1" y1="445.5" x2="494.1" y2="449.1" stroke="#c4c4c4" stroke-width="1"/>
<line x1="518.3" y1="445.5" x2="518.3" y2="449.1" stroke="#c4c4c4" stroke-width="1"/>
<line x1="542.5" y1="445.5" x2="542.5" y2="449.1" stroke="#c4c4c4" stroke-width="1"/>
<line x1="566.6" y1="445.5" x2="566.6" y2="449.1" stroke="#c4c4c4" stroke-width="1"/>
<line x1="590.8" y1="445.5" x2="590.8" y2="449.1" stroke="#c4c4c4" stroke-width="1"/>
<line x1="615.0" y1="445.5" x2="615.0" y2="449.1" stroke="#c4c4c4" stroke-width="1"/>
<line x1="639.2" y1="445.5" x2="639.2" y2="449.1" stroke="#c4c4c4" stroke-width="1"/>
<line x1="663.4" y1="445.5" x2="663.4" y2="449.1" stroke="#c4c4c4" stroke-width="1"/>
<line x1="687.6" y1="445.5" x2="687.6" y2="449.1" stroke="#c4c4c4" stroke-width="1"/>
<line x1="442.7" y1="224.0" x2="445.7" y2="224.0" stroke="#c4c4c4" stroke-width="1"/>
<line x1="442.7" y1="268.3" x2="445.7" y2="268.3" stroke="#c4c4c4" stroke-width="1"/>
<line x1="442.7" y1="312.6" x2="445.7" y2="312.6" stroke="#c4c4c4" stroke-width="1"/>
<line x1="442.7" y1="356.9" x2="445.7" y2="356.9" stroke="#c4c4c4" stroke-width="1"/>
<line x1="442.7" y1="401.2" x2="445.7" y2="401.2" stroke="#c4c4c4" stroke-width="1"/>
<line x1="442.7" y1="445.5" x2="445.7" y2="445.5" stroke="#c4c4c4" stroke-width="1"/>
<g><circle cx="652.1" cy="255.7" r="21.8" fill="#f5f8fb" stroke="#eef0f3" stroke-width="4.6"/><circle cx="652.1" cy="255.7" r="15.5" fill="#f0f4f9" stroke="none"/><path d="M628.1 279.7 L643.2 258.4 L648 263.9 L659.7 241.2 L664.2 248.8 L675.5 232.3 L670 253.6 L667.9 256.4 L662.4 251.6 L656.2 267.4 L650.1 261.9 Z" fill="#e6e8eb"/></g>
<line x1="445.7" y1="312.6" x2="687.6" y2="312.6" stroke="#dfebee" stroke-width="1.6"/>
<line x1="596.1" y1="224.0" x2="596.1" y2="445.5" stroke="#c9e3ee" stroke-width="1.4"/>
<line x1="477.5" y1="224.0" x2="477.5" y2="445.5" stroke="#a4a4a4" stroke-width="1"/>
<line x1="655.5" y1="224.0" x2="655.5" y2="445.5" stroke="#a4a4a4" stroke-width="1"/>
<text transform="translate(473.66 226.2) rotate(-90) scale(0.8 1)" font-size="10.2" fill="#bcbcbc" text-anchor="end" font-weight="normal" >Break even: 2684,57</text>
<text transform="translate(652.04 226.2) rotate(-90) scale(0.8 1)" font-size="10.2" fill="#bcbcbc" text-anchor="end" font-weight="normal" >Break even: 2795,43</text>
<g fill="none" stroke-linejoin="round">
<polyline points="445.7,268.6 449.7,273.9 453.8,279.3 457.8,284.5 461.8,289.8 465.9,294.9 469.9,300.1 473.9,305.1 478.0,310.1 482.0,314.9 486.0,319.7 490.0,324.4 494.1,328.9 498.1,333.3 502.1,337.5 506.2,341.6 510.2,345.5 514.2,349.2 518.3,352.6 522.3,355.9 526.3,358.9 530.4,361.7 534.4,364.2 538.4,366.5 542.5,368.5 546.5,370.1 550.5,371.5 554.6,372.6 558.6,373.4 562.6,373.8 566.6,373.9 570.7,373.8 574.7,373.2 578.7,372.4 582.8,371.3 586.8,369.9 590.8,368.2 594.9,366.2 598.9,363.9 602.9,361.3 607.0,358.5 611.0,355.5 615.0,352.2 619.1,348.7 623.1,345.0 627.1,341.1 631.2,337.0 635.2,332.8 639.2,328.4 643.3,323.9 647.3,319.3 651.3,314.6 655.3,309.7 659.4,304.8 663.4,299.8 667.4,294.7 671.5,289.5 675.5,284.3 679.5,279.0 683.6,273.7 687.6,268.4" stroke="#d9634f" stroke-width="1.1" stroke-dasharray="2.8,0.9"/>
<polyline points="445.7,261.3 449.7,265.9 453.8,270.5 457.8,274.9 461.8,279.3 465.9,283.6 469.9,287.7 473.9,291.8 478.0,295.7 482.0,299.5 486.0,303.2 490.0,306.7 494.1,310.1 498.1,313.4 502.1,316.5 506.2,319.4 510.2,322.2 514.2,324.8 518.3,327.2 522.3,329.4 526.3,331.5 530.4,333.4 534.4,335.1 538.4,336.5 542.5,337.8 546.5,338.9 550.5,339.8 554.6,340.5 558.6,341.0 562.6,341.2 566.6,341.3 570.7,341.1 574.7,340.8 578.7,340.2 582.8,339.5 586.8,338.5 590.8,337.3 594.9,336.0 598.9,334.4 602.9,332.7 607.0,330.7 611.0,328.6 615.0,326.3 619.1,323.8 623.1,321.2 627.1,318.4 631.2,315.4 635.2,312.3 639.2,309.0 643.3,305.6 647.3,302.1 651.3,298.4 655.3,294.6 659.4,290.7 663.4,286.6 667.4,282.5 671.5,278.3 675.5,273.9 679.5,269.5 683.6,265.0 687.6,260.4" stroke="#a76bd6" stroke-width="1.1" stroke-dasharray="2.8,0.9"/>
<polyline points="445.7,256.2 449.7,260.5 453.8,264.8 457.8,268.9 461.8,272.9 465.9,276.8 469.9,280.7 473.9,284.4 478.0,288.0 482.0,291.4 486.0,294.7 490.0,297.9 494.1,301.0 498.1,303.9 502.1,306.7 506.2,309.3 510.2,311.8 514.2,314.1 518.3,316.3 522.3,318.3 526.3,320.1 530.4,321.7 534.4,323.2 538.4,324.5 542.5,325.7 546.5,326.6 550.5,327.4 554.6,328.0 558.6,328.4 562.6,328.6 566.6,328.7 570.7,328.5 574.7,328.2 578.7,327.7 582.8,327.0 586.8,326.1 590.8,325.1 594.9,323.9 598.9,322.5 602.9,320.9 607.0,319.2 611.0,317.3 615.0,315.2 619.1,313.0 623.1,310.7 627.1,308.1 631.2,305.5 635.2,302.6 639.2,299.7 643.3,296.6 647.3,293.4 651.3,290.0 655.3,286.5 659.4,282.9 663.4,279.2 667.4,275.4 671.5,271.5 675.5,267.5 679.5,263.4 683.6,259.2 687.6,254.9" stroke="#3db39b" stroke-width="1.1" stroke-dasharray="2.8,0.9"/>
<polyline points="445.7,269.3 566.6,435.4 687.6,269.3" stroke="#3583c1" stroke-width="1.9"/>
<polyline points="445.7,250.8 449.7,254.8 453.8,258.8 457.8,262.6 461.8,266.4 465.9,270.0 469.9,273.6 473.9,277.0 478.0,280.3 482.0,283.5 486.0,286.6 490.0,289.5 494.1,292.3 498.1,295.0 502.1,297.5 506.2,299.9 510.2,302.2 514.2,304.3 518.3,306.2 522.3,308.0 526.3,309.7 530.4,311.2 534.4,312.5 538.4,313.7 542.5,314.7 546.5,315.6 550.5,316.2 554.6,316.8 558.6,317.1 562.6,317.3 566.6,317.4 570.7,317.2 574.7,316.9 578.7,316.5 582.8,315.8 586.8,315.0 590.8,314.1 594.9,313.0 598.9,311.7 602.9,310.3 607.0,308.7 611.0,307.0 615.0,305.1 619.1,303.0 623.1,300.9 627.1,298.5 631.2,296.1 635.2,293.5 639.2,290.8 643.3,287.9 647.3,284.9 651.3,281.8 655.3,278.6 659.4,275.3 663.4,271.9 667.4,268.3 671.5,264.6 675.5,260.9 679.5,257.0 683.6,253.1 687.6,249.0" stroke="#dd6410" stroke-width="1.8" stroke-dasharray="8.4,2"/>
</g>
<ellipse cx="596.1" cy="312.6" rx="3.95" ry="4.1" fill="#d95c08" stroke="#3a1a06" stroke-width="1.3"/>
<text transform="translate(442.3 227.1) scale(0.96 1)" font-size="8.6" fill="#333" text-anchor="end" font-weight="normal" >40,00</text>
<text transform="translate(442.3 271.4) scale(0.96 1)" font-size="8.6" fill="#333" text-anchor="end" font-weight="normal" >20,00</text>
<path d="M422 307.1 H441.6 L446.4 312.6 L441.6 317.9 H422 Z" fill="#b4dbe8"/>
<text transform="translate(439.6 315.5) scale(0.96 1)" font-size="8.6" fill="#4a5a66" text-anchor="end" font-weight="normal" >0,00</text>
<text transform="translate(442.3 360.0) scale(0.96 1)" font-size="8.6" fill="#333" text-anchor="end" font-weight="normal" >-20,00</text>
<text transform="translate(442.3 404.3) scale(0.96 1)" font-size="8.6" fill="#333" text-anchor="end" font-weight="normal" >-40,00</text>
<text transform="translate(442.3 448.6) scale(0.96 1)" font-size="8.6" fill="#333" text-anchor="end" font-weight="normal" >-60,00</text>
<text transform="translate(443.1 456.0) rotate(31.5) scale(0.9 1)" font-size="8.7" fill="#222" text-anchor="start" font-weight="normal" >2665,00</text>
<text transform="translate(467.29 456.0) rotate(31.5) scale(0.9 1)" font-size="8.7" fill="#222" text-anchor="start" font-weight="normal" >2680,00</text>
<text transform="translate(491.48 456.0) rotate(31.5) scale(0.9 1)" font-size="8.7" fill="#222" text-anchor="start" font-weight="normal" >2695,00</text>
<text transform="translate(515.67 456.0) rotate(31.5) scale(0.9 1)" font-size="8.7" fill="#222" text-anchor="start" font-weight="normal" >2710,00</text>
<text transform="translate(539.86 456.0) rotate(31.5) scale(0.9 1)" font-size="8.7" fill="#222" text-anchor="start" font-weight="normal" >2725,00</text>
<text transform="translate(564.05 456.0) rotate(31.5) scale(0.9 1)" font-size="8.7" fill="#222" text-anchor="start" font-weight="normal" >2740,00</text>
<text transform="translate(588.24 456.0) rotate(31.5) scale(0.9 1)" font-size="8.7" fill="#222" text-anchor="start" font-weight="normal" >2755,00</text>
<text transform="translate(612.43 456.0) rotate(31.5) scale(0.9 1)" font-size="8.7" fill="#222" text-anchor="start" font-weight="normal" >2770,00</text>
<text transform="translate(636.62 456.0) rotate(31.5) scale(0.9 1)" font-size="8.7" fill="#222" text-anchor="start" font-weight="normal" >2785,00</text>
<text transform="translate(660.81 456.0) rotate(31.5) scale(0.9 1)" font-size="8.7" fill="#222" text-anchor="start" font-weight="normal" >2800,00</text>
<text transform="translate(685.0 456.0) rotate(31.5) scale(0.9 1)" font-size="8.7" fill="#222" text-anchor="start" font-weight="normal" >2815,00</text>
<path d="M579.6 449.9 H590.9 L596.1 444.9 L601 449.9 H612 V460.3 H579.6 Z" fill="#b4dbe8"/>
<text transform="translate(596.2 458.4) scale(0.96 1)" font-size="8.6" fill="#4a5a66" text-anchor="middle" font-weight="normal" >2758,25</text>
<text transform="translate(562.2 178.3) scale(0.956 1)" font-size="10" fill="#111" text-anchor="middle" font-weight="bold" >E1CX8 2740 Long Straddle</text>
<text transform="translate(567.0 485.4) scale(0.905 1)" font-size="9.3" fill="#333" text-anchor="middle" font-weight="normal" >Future Price</text>
<text transform="translate(407.8 334.6) rotate(-90) scale(1.0 1)" font-size="9.3" fill="#333" text-anchor="middle" font-weight="normal" >Expected Return (Ticks)</text>
<line x1="452.2" y1="197.8" x2="468.2" y2="197.8" stroke="#3b87c3" stroke-width="1.6" />
<text transform="translate(471.4 201.3) scale(0.89 1)" font-size="9.3" fill="#333" text-anchor="start" font-weight="normal" >B/E</text>
<line x1="496" y1="197.8" x2="512.2" y2="197.8" stroke="#dd6410" stroke-width="2.0" stroke-dasharray="4.6,1.6"/>
<text transform="translate(516 201.3) scale(0.89 1)" font-size="9.3" fill="#333" text-anchor="start" font-weight="normal" >Current</text>
<line x1="556.4" y1="197.8" x2="572.4" y2="197.8" stroke="#3db39b" stroke-width="1.9" stroke-dasharray="4.6,1.6"/>
<text transform="translate(575.6 201.3) scale(0.89 1)" font-size="9.3" fill="#333" text-anchor="start" font-weight="normal" >+1</text>
<line x1="597.2" y1="197.8" x2="613.4" y2="197.8" stroke="#a76bd6" stroke-width="1.9" stroke-dasharray="4.6,1.6"/>
<text transform="translate(617.6 201.3) scale(0.89 1)" font-size="9.3" fill="#333" text-anchor="start" font-weight="normal" >+2</text>
<line x1="638.4" y1="197.8" x2="654.6" y2="197.8" stroke="#d9634f" stroke-width="1.9" stroke-dasharray="4.6,1.6"/>
<text transform="translate(658.8 201.3) scale(0.89 1)" font-size="9.3" fill="#333" text-anchor="start" font-weight="normal" >+4</text>
</svg>
</body></html>
